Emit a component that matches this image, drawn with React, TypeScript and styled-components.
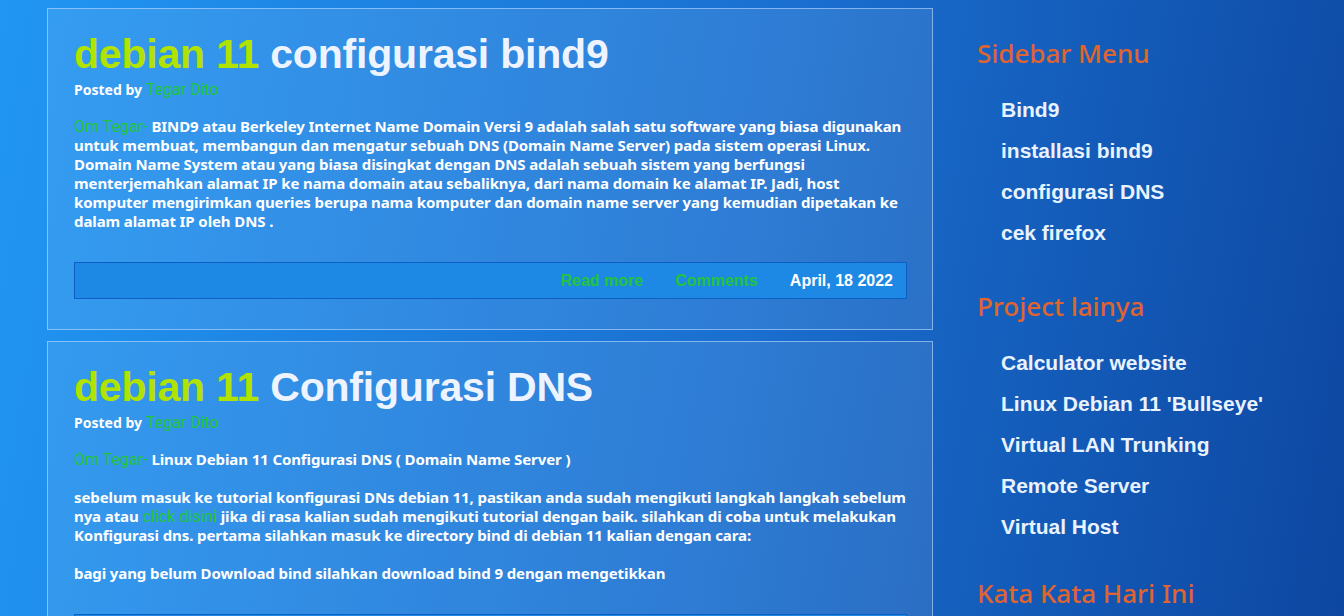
import React from "react";
import styled, { createGlobalStyle } from "styled-components";

const Global = createGlobalStyle`
  html, body { margin: 0; padding: 0; }
  body {
    width: 1344px;
    height: 616px;
    overflow: hidden;
    background: linear-gradient(100deg, #2196f3 0%, #1a6fd0 55%, #0d47a1 100%);
    font-family: "Noto Sans", sans-serif;
  }
`;

const Page = styled.div`
  display: grid;
  grid-template-columns: 886px 1fr;
  column-gap: 44px;
  padding: 8px 0 0 47px;
  height: 616px;
  box-sizing: border-box;
`;

const Main = styled.main`
  display: flex;
  flex-direction: column;
  gap: 11px;
`;

const Card = styled.article`
  border: 1px solid rgba(190, 220, 255, 0.6);
  background: rgba(255, 255, 255, 0.09);
  padding: 22px 25px 30px 26px;
  box-sizing: border-box;
`;

const Title = styled.h2`
  margin: 0;
  font-family: "Liberation Sans", Arial, sans-serif;
  font-weight: 700;
  font-size: 41px;
  line-height: 46px;
  letter-spacing: -0.2px;
  color: #eef4ff;
`;

const Lime = styled.span`
  color: #b2e200;
`;

const Meta = styled.div`
  margin-top: 5px;
  font-family: "Noto Sans", sans-serif;
  font-weight: 700;
  font-size: 14px;
  line-height: 16px;
  color: #ffffff;
`;

const Green = styled.span`
  font-family: Roboto, sans-serif;
  font-weight: 400;
  font-size: 16px;
  color: #22c53a;
`;

const Body = styled.div`
  margin-top: 19px;
  font-family: "Noto Sans", sans-serif;
  font-weight: 700;
  font-size: 15px;
  line-height: 19px;
  letter-spacing: -0.1px;
  color: #ffffff;
  p { margin: 0; }
  p + p { margin-top: 19px; }
`;

const GreenText = styled.span`
  font-family: Roboto, sans-serif;
  font-weight: 400;
  font-size: 16px;
  letter-spacing: 0;
  color: #22c53a;
`;

const Footer = styled.div`
  margin-top: 31px;
  display: flex;
  justify-content: flex-end;
  align-items: center;
  gap: 32px;
  height: 35px;
  padding: 0 13px;
  background: #1e88e5;
  border: 1px solid #0d5fc4;
  font-family: "Liberation Sans", Arial, sans-serif;
  font-weight: 700;
  font-size: 16px;
`;

const FooterLink = styled.span<{ $light?: boolean }>`
  color: ${(p) => (p.$light ? "#ffffff" : "#22c53a")};
`;

const Sidebar = styled.aside`
  display: flex;
  flex-direction: column;
  gap: 37px;
  padding-top: 28px;
`;

const Widget = styled.section<{ $extra?: number }>`
  display: flex;
  flex-direction: column;
  padding-bottom: ${(p) => p.$extra ?? 0}px;
`;

const WidgetTitle = styled.h3`
  margin: 0 0 28px;
  font-family: "Noto Sans", sans-serif;
  font-weight: 500;
  font-size: 26px;
  line-height: 34px;
  color: #e0642f;
`;

const LinkList = styled.ul`
  list-style: none;
  margin: 0;
  padding: 0 0 0 24px;
  display: flex;
  flex-direction: column;
  gap: 17px;
`;

const LinkItem = styled.li`
  font-family: "Liberation Sans", Arial, sans-serif;
  font-weight: 700;
  font-size: 21px;
  line-height: 24px;
  color: #e9f2ff;
`;

const posts = [
  {
    rest: "configurasi bind9",
    body: [
      <p key="a">
        <GreenText>Om Tegar- </GreenText>BIND9 atau Berkeley Internet Name Domain Versi 9 adalah salah satu
        software yang biasa digunakan untuk membuat, membangun dan mengatur sebuah DNS (Domain Name Server)
        pada sistem operasi Linux. Domain Name System atau yang biasa disingkat dengan DNS adalah sebuah
        sistem yang berfungsi menterjemahkan alamat IP ke nama domain atau sebaliknya, dari nama domain ke
        alamat IP. Jadi, host komputer mengirimkan queries berupa nama komputer dan domain name server yang
        kemudian dipetakan ke dalam alamat IP oleh DNS .
      </p>,
    ],
    date: "April, 18 2022",
  },
  {
    rest: "Configurasi DNS",
    body: [
      <p key="a">
        <GreenText>Om Tegar- </GreenText>Linux Debian 11 Configurasi DNS ( Domain Name Server )
      </p>,
      <p key="b">
        sebelum masuk ke tutorial konfigurasi DNs debian 11, pastikan anda sudah mengikuti langkah langkah
        sebelum nya atau <GreenText>click disini</GreenText> jika di rasa kalian sudah mengikuti tutorial
        dengan baik. silahkan di coba untuk melakukan Konfigurasi dns. pertama silahkan masuk ke directory
        bind di debian 11 kalian dengan cara:
      </p>,
      <p key="c">bagi yang belum Download bind silahkan download bind 9 dengan mengetikkan</p>,
    ],
    date: "April, 18 2022",
  },
];

const widgets = [
  { title: "Sidebar Menu", extra: 7, links: ["Bind9", "installasi bind9", "configurasi DNS", "cek firefox"] },
  {
    title: "Project lainya",
    extra: 0,
    links: [
      "Calculator website",
      "Linux Debian 11 'Bullseye'",
      "Virtual LAN Trunking",
      "Remote Server",
      "Virtual Host",
    ],
  },
  { title: "Kata Kata Hari Ini", extra: 0, links: [] },
];

export default function App() {
  return (
    <>
      <Global />
      <Page>
        <Main>
          {posts.map((p, i) => (
            <Card key={i}>
              <Title>
                <Lime>debian 11</Lime> {p.rest}
              </Title>
              <Meta>
                Posted by <Green>Tegar Dito</Green>
              </Meta>
              <Body>{p.body}</Body>
              <Footer>
                <FooterLink>Read more</FooterLink>
                <FooterLink>Comments</FooterLink>
                <FooterLink $light>{p.date}</FooterLink>
              </Footer>
            </Card>
          ))}
        </Main>
        <Sidebar>
          {widgets.map((w) => (
            <Widget key={w.title} $extra={w.extra}>
              <WidgetTitle>{w.title}</WidgetTitle>
              {w.links.length > 0 && (
                <LinkList>
                  {w.links.map((l) => (
                    <LinkItem key={l}>{l}</LinkItem>
                  ))}
                </LinkList>
              )}
            </Widget>
          ))}
        </Sidebar>
      </Page>
    </>
  );
}
